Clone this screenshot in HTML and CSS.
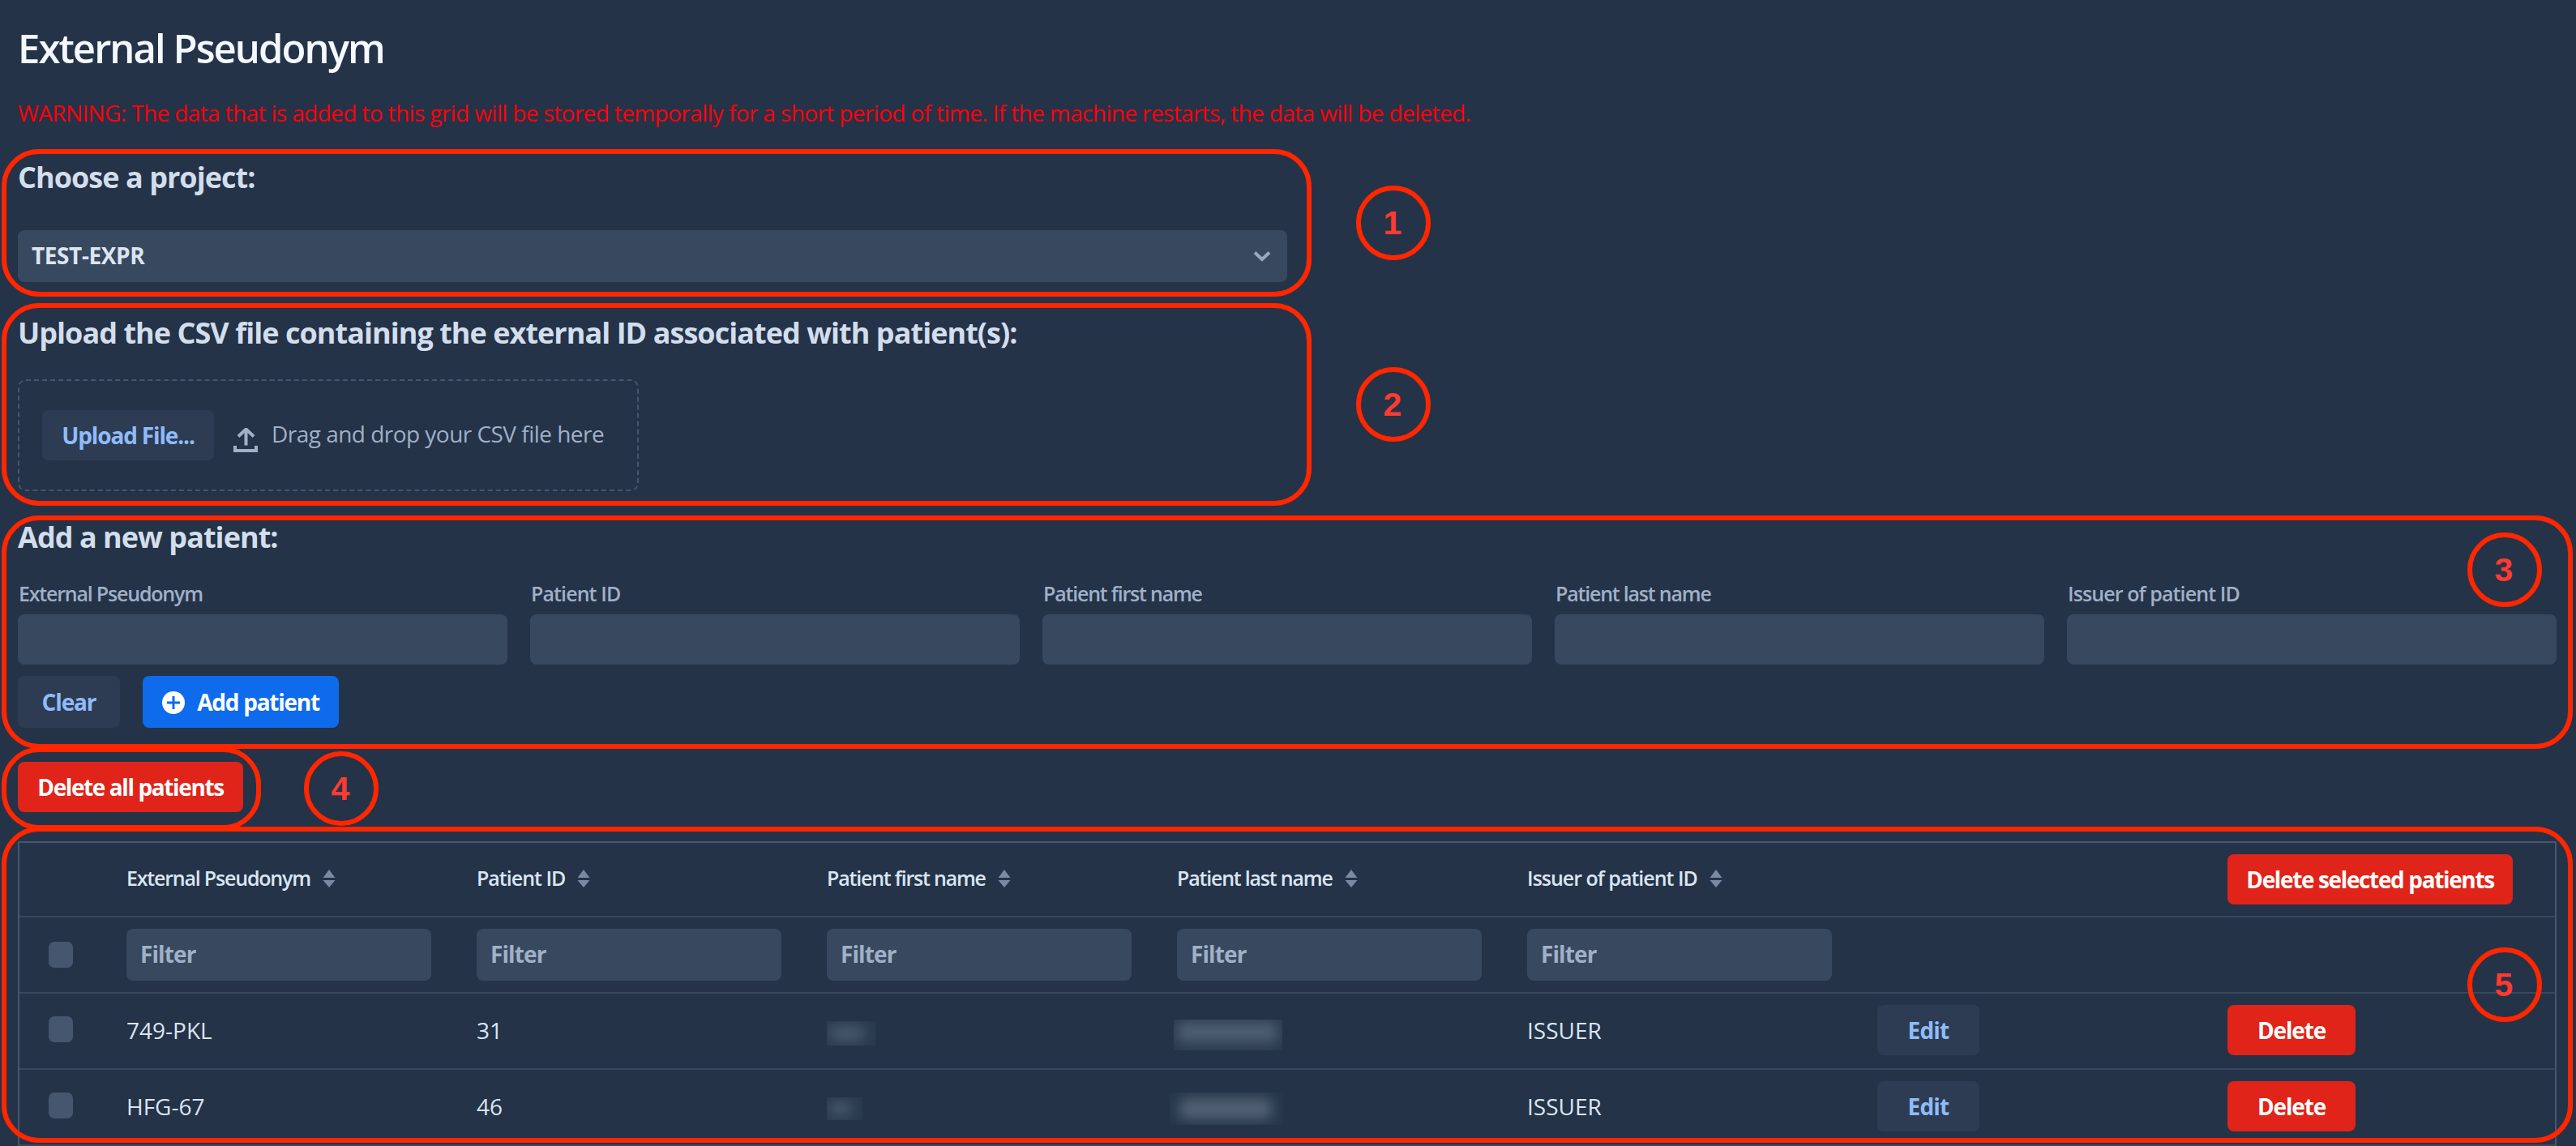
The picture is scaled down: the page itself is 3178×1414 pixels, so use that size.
FILE: index.html
```html
<!DOCTYPE html>
<html lang="en">
<head>
<meta charset="utf-8">
<title>External Pseudonym</title>
<link rel="stylesheet" href="styles.css">
</head>
<body>
<svg class="defs" width="0" height="0">
  <symbol id="sorter" viewBox="0 0 16 22">
    <path d="M8 0l7.5 10H.5z M8 22L.5 13h15z"/>
  </symbol>
</svg>
<main class="page">
  <h1 class="title">External Pseudonym</h1>
  <p class="warning">WARNING: The data that is added to this grid will be stored temporally for a short period of time. If the machine restarts, the data will be deleted.</p>

  <section class="project">
    <h3>Choose a project:</h3>
    <div class="select">
      <span>TEST-EXPR</span>
      <svg class="chevron" width="22" height="14" viewBox="0 0 22 14"><path d="M2 2.5l9 8.5 9-8.5"/></svg>
    </div>
  </section>

  <section class="upload">
    <h3>Upload the CSV file containing the external ID associated with patient(s):</h3>
    <div class="dropzone">
      <button class="btn upload-btn">Upload File...</button>
      <svg class="upload-icon" width="30" height="30" viewBox="0 0 30 30"><path d="M15.500 2v19.500M6 10.500l9.500-9 9.500 9"/><path d="M2 22v6h26v-6"/></svg>
      <span class="drop-label">Drag and drop your CSV file here</span>
    </div>
  </section>

  <section class="add">
    <h3>Add a new patient:</h3>
    <div class="form">
      <label class="name">External Pseudonym<input type="text"></label>
      <label>Patient ID<input type="text"></label>
      <label class="name">Patient first name<input type="text"></label>
      <label class="name">Patient last name<input type="text"></label>
      <label>Issuer of patient ID<input type="text"></label>
    </div>
    <div class="actions">
      <button class="btn clear">Clear</button>
      <button class="btn primary">
        <svg width="28" height="28" viewBox="0 0 28 28"><circle cx="14" cy="14" r="14"/><path d="M14 6v16M6 14h16"/></svg>
        <span>Add patient</span>
      </button>
    </div>
  </section>

  <button class="btn danger delete-all">Delete all patients</button>

  <div class="grid">
    <div class="row head">
      <div></div>
      <div class="name">External Pseudonym<svg class="sorter"><use href="#sorter"/></svg></div>
      <div>Patient ID<svg class="sorter"><use href="#sorter"/></svg></div>
      <div class="name">Patient first name<svg class="sorter"><use href="#sorter"/></svg></div>
      <div class="name">Patient last name<svg class="sorter"><use href="#sorter"/></svg></div>
      <div>Issuer of patient ID<svg class="sorter"><use href="#sorter"/></svg></div>
      <div></div>
      <div><button class="btn danger delete-selected">Delete selected patients</button></div>
    </div>
    <div class="row filters">
      <div><span class="check"></span></div>
      <div><span class="filter">Filter</span></div>
      <div><span class="filter">Filter</span></div>
      <div><span class="filter">Filter</span></div>
      <div><span class="filter">Filter</span></div>
      <div><span class="filter">Filter</span></div>
      <div></div>
      <div></div>
    </div>
    <div class="row data">
      <div><span class="check"></span></div>
      <div>749-PKL</div>
      <div>31</div>
      <div><span class="redacted first-a"></span></div>
      <div><span class="redacted last-a"></span></div>
      <div>ISSUER</div>
      <div><button class="btn edit">Edit</button></div>
      <div><button class="btn danger delete">Delete</button></div>
    </div>
    <div class="row data">
      <div><span class="check"></span></div>
      <div>HFG-67</div>
      <div>46</div>
      <div><span class="redacted first-b"></span></div>
      <div><span class="redacted last-b"></span></div>
      <div>ISSUER</div>
      <div><button class="btn edit">Edit</button></div>
      <div><button class="btn danger delete">Delete</button></div>
    </div>
  </div>

  <div class="frame frame-1"></div>
  <div class="frame frame-2"></div>
  <div class="frame frame-3"></div>
  <div class="frame frame-4"></div>
  <div class="frame frame-5"></div>
  <div class="marker marker-1">1</div>
  <div class="marker marker-2">2</div>
  <div class="marker marker-3">3</div>
  <div class="marker marker-4">4</div>
  <div class="marker marker-5">5</div>
</main>
</body>
</html>
```
FILE: styles.css
```css
:root {
  --base: #243348;
  --field: #38485e;
  --subtle: #2d3c52;
  --line: #38485e;
  --border: #46566e;
  --heading: #d3deec;
  --body: #dbe5f2;
  --secondary: #a0b0c7;
  --link: #8fbbfa;
  --annotation: #ff2600;
}

* { box-sizing: border-box; }

body {
  margin: 0;
  background: var(--base);
  color: var(--body);
  font: 400 28px/44px "Open Sans", "Noto Sans", sans-serif;
}

.defs { position: absolute; }

.page {
  position: relative;
  height: 1414px;
  padding: 27px 24px 0 22px;
  overflow: hidden;
}

h1, h3, p { margin: 0; }

.title {
  color: #f5f9ff;
  font-size: 49px;
  font-weight: 600;
  line-height: 64px;
  letter-spacing: -1.95px;
}

.warning {
  margin-top: 26px;
  color: #ff0008;
  letter-spacing: -0.63px;
}

h3 {
  color: var(--heading);
  font-size: 36px;
  font-weight: 700;
  line-height: 46px;
  letter-spacing: -0.96px;
}

.project { margin-top: 35px; }
.upload { margin-top: 40px; }
.add { margin-top: 34px; }

.select {
  display: flex;
  align-items: center;
  justify-content: space-between;
  width: 1566px;
  height: 64px;
  margin-top: 42px;
  padding: 0 20px 2px 17px;
  border-radius: 8px;
  background: var(--field);
  font-weight: 700;
  letter-spacing: -0.4px;
}

.chevron {
  margin-top: 2px;
  fill: none;
  stroke: #97a8c0;
  stroke-width: 4;
}

.dropzone {
  display: flex;
  align-items: center;
  width: 766px;
  height: 138px;
  margin-top: 34px;
  padding-left: 28px;
  border: 2px dashed var(--border);
  border-radius: 10px;
}

.upload-icon {
  margin: 12px 17px 0 24px;
  fill: none;
  stroke: var(--secondary);
  stroke-width: 4;
}

.drop-label {
  padding-bottom: 4px;
  color: var(--secondary);
  letter-spacing: -0.53px;
}

.btn {
  display: flex;
  flex: none;
  align-items: center;
  justify-content: center;
  height: 62px;
  padding: 0;
  border: 0;
  border-radius: 8px;
  background: var(--subtle);
  color: var(--link);
  font: 700 28px/44px "Open Sans", "Noto Sans", sans-serif;
  letter-spacing: -1.15px;
}

.danger { background: #e02419; color: #fff; }
.upload-btn { width: 212px; }
.delete-all { width: 278px; margin-top: 42px; letter-spacing: -1.4px; }
.delete-selected { width: 352px; letter-spacing: -1.37px; }
.delete { width: 158px; }
.edit { width: 126px; letter-spacing: -0.8px; }

.form {
  display: grid;
  grid-template-columns: repeat(5, 1fr);
  column-gap: 28px;
  margin-top: 29px;
}

.form label {
  display: flex;
  flex-direction: column;
  gap: 9px;
  color: var(--secondary);
  font-size: 25px;
  font-weight: 600;
  line-height: 34px;
  letter-spacing: -0.9px;
  text-indent: 1px;
}

.form .name, .head .name { letter-spacing: -1.2px; }

.form input {
  width: 100%;
  height: 62px;
  border: 0;
  border-radius: 8px;
  background: var(--field);
}

.actions {
  display: flex;
  gap: 28px;
  margin-top: 14px;
}

.actions .btn { height: 64px; padding-bottom: 1px; }
.actions .clear { width: 126px; }

.actions .primary {
  gap: 15px;
  width: 242px;
  background: #0d6bec;
  color: #fff;
  letter-spacing: -1.25px;
}

.primary svg {
  margin-top: 2px;
  fill: #fff;
  stroke: #0d6bec;
  stroke-width: 3;
}

.primary circle { stroke: none; }

.grid {
  margin-top: 36px;
  border: 2px solid var(--border);
  border-bottom: 0;
}

.row {
  display: grid;
  grid-template-columns: 104px repeat(7, 432px);
  height: 94px;
  border-bottom: 2px solid var(--line);
}

.row > div {
  display: flex;
  align-items: center;
  padding: 0 28px;
}

.head {
  height: 92px;
  font-size: 25px;
  font-weight: 600;
  letter-spacing: -1px;
}

.head > div { padding-bottom: 5px; }
.head > div:last-child { padding-bottom: 0; }

.data > div { padding-bottom: 2px; }

.row > div:first-child { padding-left: 36px; }

.sorter {
  width: 16px;
  height: 22px;
  margin: 2px 0 0 15px;
  fill: #7a8aa2;
}

.check {
  width: 30px;
  height: 32px;
  border-radius: 7px;
  background: var(--border);
}

.data .check { margin-bottom: 2px; }

.filter {
  width: 376px;
  height: 64px;
  padding-left: 17px;
  border-radius: 8px;
  background: var(--field);
  color: var(--secondary);
  font-weight: 700;
  line-height: 63px;
  letter-spacing: -0.9px;
}

.redacted {
  position: relative;
  overflow: hidden;
  background: #2a3a4f;
}

.redacted::before {
  content: "";
  position: absolute;
  inset: 6px 14px 6px 3px;
  border-radius: 6px;
  background: #4b5a6d;
  filter: blur(8px);
}

.first-a { width: 60px; height: 30px; margin-top: 8px; }
.last-a { width: 134px; height: 38px; margin: 12px 0 0 -4px; }
.first-b { width: 44px; height: 28px; margin-top: 6px; }
.last-b { width: 140px; height: 40px; margin: 6px 0 0 -9px; }
.last-a::before { inset: 3px 6px 10px 4px; background: #4f5e71; }
.last-b::before { inset: 7px 14px 7px 12px; background: #526173; }
.last-b { background: #26364b; }

.frame {
  position: absolute;
  left: 2px;
  border: 6px solid var(--annotation);
  border-radius: 46px;
}

.frame-1 { top: 184px; width: 1616px; height: 182px; }
.frame-2 { top: 374px; width: 1616px; height: 250px; }
.frame-3 { top: 636px; width: 3172px; height: 288px; }
.frame-4 { top: 922px; width: 320px; height: 102px; }
.frame-5 { top: 1020px; width: 3172px; height: 390px; }

.marker {
  position: absolute;
  width: 92px;
  height: 92px;
  padding-right: 2px;
  border: 6px solid var(--annotation);
  border-radius: 50%;
  color: #ff3b30;
  font: 700 41px/81px "Liberation Sans", Arial, sans-serif;
  text-align: center;
}

.marker-1 { left: 1673px; top: 229px; }
.marker-2 { left: 1673px; top: 453px; }
.marker-3 { left: 3044px; top: 657px; }
.marker-4 { left: 375px; top: 927px; }
.marker-5 { left: 3044px; top: 1169px; }
```
